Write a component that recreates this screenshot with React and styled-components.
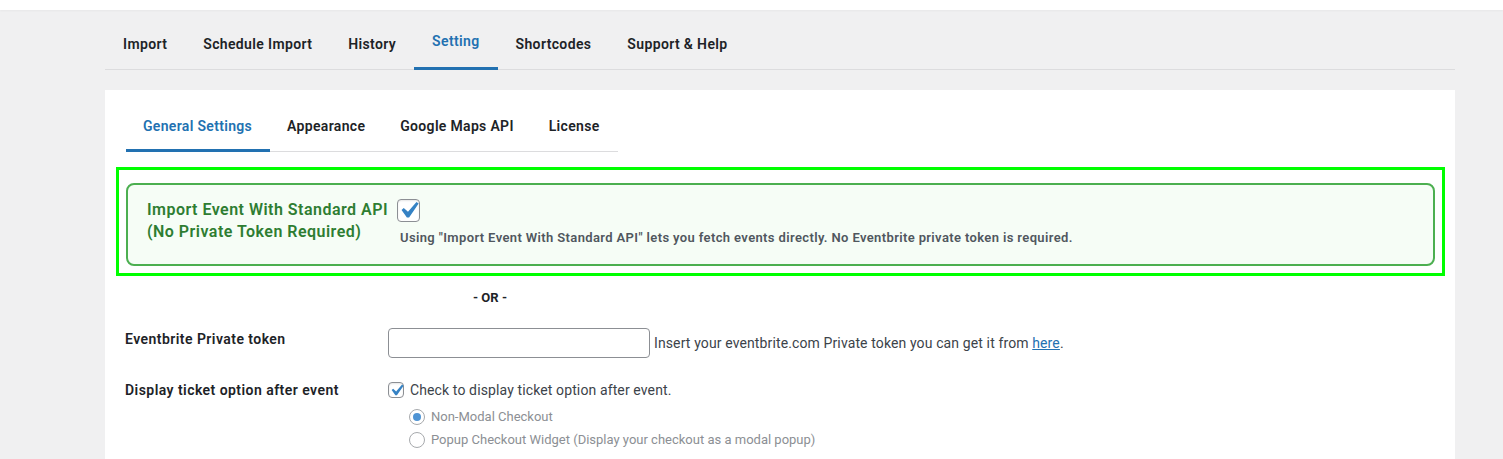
import React from "react";
import styled, { createGlobalStyle } from "styled-components";

const GlobalStyle = createGlobalStyle`
  html, body {
    margin: 0;
    padding: 0;
    background: #f0f0f1;
    font-family: Roboto, "Liberation Sans", sans-serif;
    color: #1d2327;
    -webkit-font-smoothing: antialiased;
  }
  * { box-sizing: border-box; }
`;

const TopStrip = styled.div`
  height: 10px;
  background: #ffffff;
  box-shadow: 0 1px 2px rgba(0, 0, 0, 0.04);
`;

const Wrap = styled.div`
  padding: 0 48px 0 105px;
`;

const NavBar = styled.nav`
  display: flex;
  border-bottom: 1px solid #dcdcde;
  height: 60px;
`;

const NavTab = styled.a`
  display: block;
  height: 60px;
  padding: ${(p) => (p.$active ? "21px" : "24px")} 18px 0;
  font-size: 14px;
  line-height: 20px;
  font-weight: 600;
  letter-spacing: 0.36px;
  color: ${(p) => (p.$active ? "#2271b1" : "#1d2327")};
  text-decoration: none;
  box-shadow: ${(p) => (p.$active ? "inset 0 -3px 0 #2271b1" : "none")};
  margin-bottom: -1px;
`;

const Panel = styled.div`
  margin-top: 20px;
  background: #ffffff;
  padding: 12px 10px 0 0;
  min-height: 400px;
`;

const SubTabs = styled.div`
  display: inline-flex;
  margin-left: 21px;
  border-bottom: 1px solid #dcdcde;
`;

const SubTab = styled.a`
  display: block;
  height: 50px;
  padding: 14px 18px 0 17px;
  font-size: 14px;
  line-height: 20px;
  font-weight: 600;
  letter-spacing: 0.32px;
  color: ${(p) => (p.$active ? "#2271b1" : "#1d2327")};
  text-decoration: none;
  box-shadow: ${(p) => (p.$active ? "inset 0 -3px 0 #2271b1" : "none")};
  margin-bottom: -1px;
`;

const Highlight = styled.div`
  margin: 15px 0 0 11px;
  border: 3px solid #00ff00;
  padding: 13px 7px 7px;
`;

const ApiBox = styled.div`
  display: flex;
  border: 2px solid #4caf50;
  border-radius: 8px;
  background: #f6fdf6;
  padding: 14px 19px 18px;
`;

const ApiLabel = styled.div`
  width: 250px;
  font-size: 16px;
  line-height: 22px;
  font-weight: 600;
  letter-spacing: 0.48px;
  color: #2e7d32;
`;

const ApiField = styled.div`
  display: flex;
  flex-direction: column;
  align-items: flex-start;
  gap: 7px;
`;

const CheckBox = styled.span`
  display: inline-flex;
  align-items: center;
  justify-content: center;
  flex: none;
  overflow: visible;
  width: ${(p) => p.$size}px;
  height: ${(p) => p.$size}px;
  border: 1px solid #8c8f94;
  border-radius: 4px;
  background: #ffffff;
  box-shadow: inset 0 1px 2px rgba(0, 0, 0, 0.1);
  svg {
    flex: none;
    width: ${(p) => Math.round(p.$size * 1.45)}px;
    height: ${(p) => Math.round(p.$size * 1.45)}px;
  }
`;

const ApiHint = styled.p`
  margin: 0 0 0 3px;
  font-size: 13px;
  line-height: 17px;
  font-weight: 600;
  letter-spacing: 0.37px;
  color: #50575e;
`;

const OrLine = styled.div`
  margin: 13px 0 3px;
  padding-left: 368px;
  font-size: 13px;
  line-height: 18px;
  font-weight: 700;
  color: #1d2327;
`;

const FormRow = styled.div`
  display: flex;
  height: ${(p) => p.$height}px;
`;

const RowLabel = styled.div`
  width: 283px;
  padding: ${(p) => p.$top}px 0 0 20px;
  font-size: 14px;
  line-height: 18px;
  font-weight: 600;
  letter-spacing: 0.45px;
  color: #1d2327;
`;

const RowField = styled.div`
  padding-top: ${(p) => p.$top}px;
  font-size: 14px;
  line-height: 18px;
  letter-spacing: 0.12px;
  color: #3c434a;
`;

const Inline = styled.div`
  display: flex;
  align-items: center;
  gap: ${(p) => p.$gap}px;
`;

const TextInput = styled.input`
  width: 262px;
  height: 30px;
  border: 1px solid #8c8f94;
  border-radius: 4px;
  background: #fff;
  padding: 0 8px;
  font: inherit;
`;

const Link = styled.a`
  color: #2271b1;
  text-decoration: underline;
`;

const RadioList = styled.div`
  margin: 6px 0 0 21px;
  display: flex;
  flex-direction: column;
`;

const RadioItem = styled.label`
  display: flex;
  align-items: center;
  gap: 6px;
  height: 23px;
  font-size: 13px;
  letter-spacing: 0;
  color: #8c8f94;
`;

const Radio = styled.span`
  width: 16px;
  height: 16px;
  border-radius: 50%;
  border: 1px solid #a7aaad;
  background: #fff;
  display: flex;
  align-items: center;
  justify-content: center;
  &::after {
    content: "";
    width: 8px;
    height: 8px;
    border-radius: 50%;
    background: ${(p) => (p.$checked ? "#4f94d4" : "transparent")};
  }
`;

const Check = () => (
  <svg viewBox="0 0 20 20">
    <path
      fill="#3582c4"
      d="M14.83 4.89l1.34.94-5.81 8.38H9.02L5.78 9.67l1.34-1.25 2.57 2.4z"
    />
  </svg>
);

const mainTabs = ["Import", "Schedule Import", "History", "Setting", "Shortcodes", "Support & Help"];
const subTabs = ["General Settings", "Appearance", "Google Maps API", "License"];

export default function App() {
  return (
    <>
      <GlobalStyle />
      <TopStrip />
      <Wrap>
        <NavBar>
          {mainTabs.map((t) => (
            <NavTab key={t} href="#" $active={t === "Setting"}>
              {t}
            </NavTab>
          ))}
        </NavBar>
        <Panel>
          <SubTabs>
            {subTabs.map((t) => (
              <SubTab key={t} href="#" $active={t === "General Settings"}>
                {t}
              </SubTab>
            ))}
          </SubTabs>

          <Highlight>
            <ApiBox>
              <ApiLabel>
                Import Event With Standard API
                <br />
                (No Private Token Required)
              </ApiLabel>
              <ApiField>
                <CheckBox $size={23}>
                  <Check />
                </CheckBox>
                <ApiHint>
                  Using "Import Event With Standard API" lets you fetch events directly. No Eventbrite private token is required.
                </ApiHint>
              </ApiField>
            </ApiBox>
          </Highlight>

          <OrLine>- OR -</OrLine>

          <FormRow $height={51}>
            <RowLabel $top={20}>Eventbrite Private token</RowLabel>
            <RowField $top={18}>
              <Inline $gap={4}>
                <TextInput type="text" />
                <span>
                  Insert your eventbrite.com Private token you can get it from <Link href="#">here</Link>.
                </span>
              </Inline>
            </RowField>
          </FormRow>

          <FormRow $height={120}>
            <RowLabel $top={20}>Display ticket option after event</RowLabel>
            <RowField $top={20}>
              <Inline $gap={6}>
                <CheckBox $size={16}>
                  <Check />
                </CheckBox>
                <span>Check to display ticket option after event.</span>
              </Inline>
              <RadioList>
                <RadioItem>
                  <Radio $checked />
                  Non-Modal Checkout
                </RadioItem>
                <RadioItem>
                  <Radio />
                  Popup Checkout Widget (Display your checkout as a modal popup)
                </RadioItem>
              </RadioList>
            </RowField>
          </FormRow>
        </Panel>
      </Wrap>
    </>
  );
}
